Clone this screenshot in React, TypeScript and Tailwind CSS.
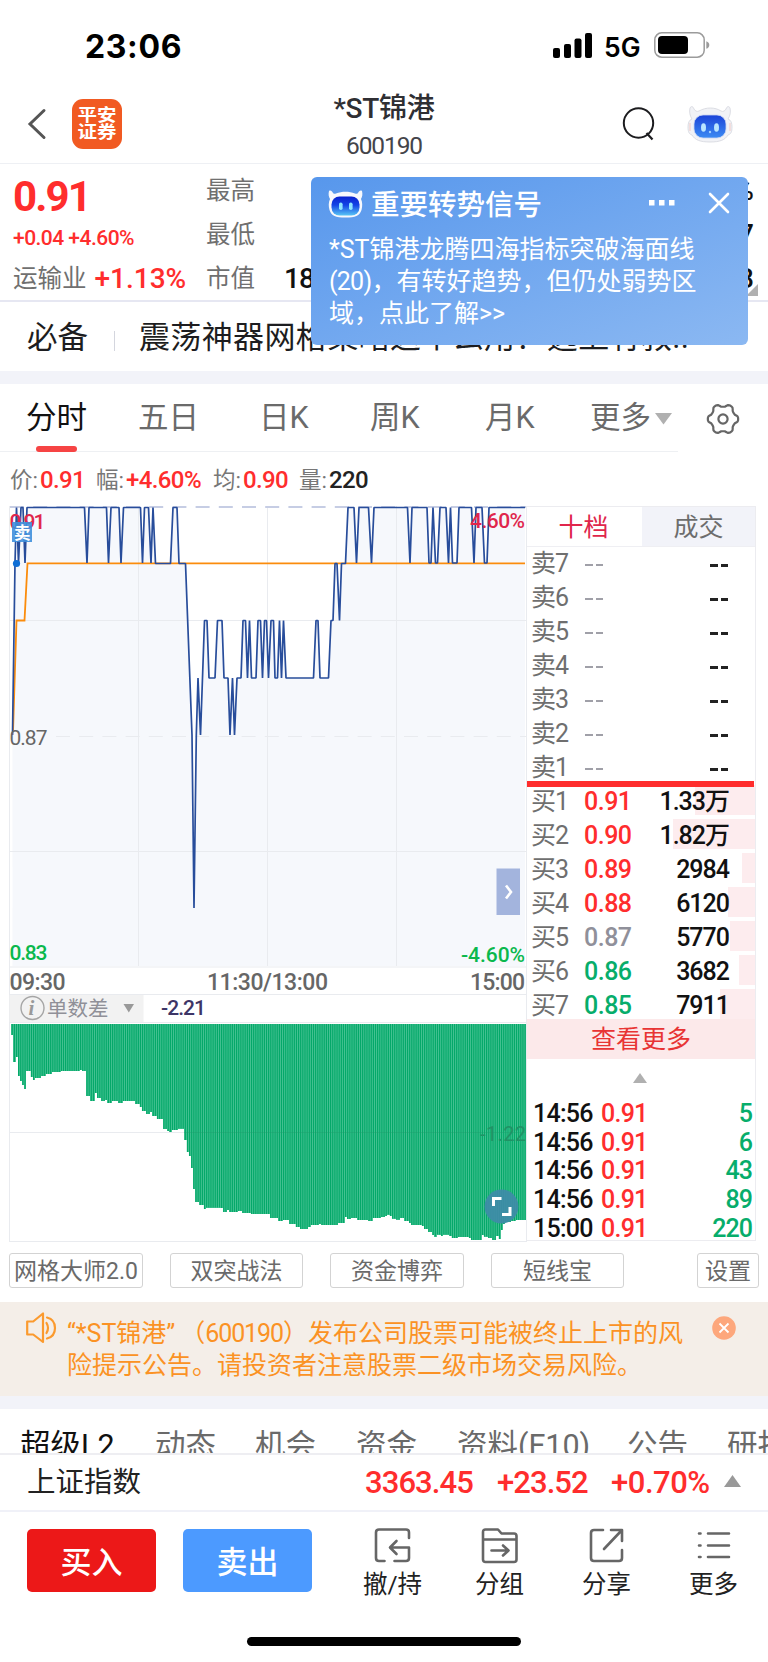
import type { ReactNode } from 'react'

const PRICE_POINTS =
  '12.5,735 15,563 16.5,507.5 18.5,563 21,507.5 23,507.5 25,563 27,507.5 84.5,507.5 87,563 89,507.5 106.5,507.5 108.5,563 111,507.5 119,507.5 121,563 123.5,507.5 140.5,507.5 142.5,563 144.5,507.5 148.5,507.5 151,563 153,507.5 155.5,563.5 170.5,563.5 173,507.5 177,507.5 179,563.5 185.5,563.5 192,735 194,908 196.3,735 198,678 200.5,735 204.5,620.5 207,620.5 209,678 215,678 217.5,620.5 222,620.5 224,678 228,678 230,735 232.5,678 234.5,735 237,678 241,678 243,620.5 245.5,620.5 247.5,678 249.5,620.5 251.5,678 256,678 258,620.5 260.5,620.5 262.5,678 264.5,620.5 266.5,620.5 268.5,678 271,620.5 273.5,620.5 275,678 277.5,678 279.5,620.5 281.5,678 283.5,620.5 286,678 313.5,678 316,620.5 318,620.5 320,678 328.5,678 331,620.5 333,620.5 335,563.5 337,563.5 339.5,620.5 341.5,563.5 345.5,563.5 348,507.5 354,507.5 356.5,563 359,507.5 368.5,507.5 371.5,563 374,507.5 407.5,507.5 410,563 412,507.5 427,507.5 429,563 431,563 433,507.5 435.5,563 437.5,563 440,507.5 446,507.5 448.5,563 450.5,507.5 452.5,563 457,563 459,507.5 471.5,507.5 474,563 476,507.5 482,507.5 484.5,563 487,563 489,507.5 525,507.5'

// [x, bottom] pairs: every bar from x onwards hangs down to this level
const BAR_STEPS: [number, number][] = [
  [11, 1035], [13, 1062], [15, 1057], [17.5, 1076], [19.5, 1081], [21.5, 1085], [23.5, 1089], [26, 1071],
  [30, 1077], [32.5, 1080], [34.5, 1078], [41, 1076], [45, 1074], [52, 1072], [60, 1071], [79, 1070],
  [82, 1071], [86, 1096], [90, 1101], [94.5, 1093], [97, 1098], [101, 1101], [104, 1100], [107, 1103],
  [111, 1101], [118, 1103], [122, 1101], [134, 1104], [139, 1107], [142, 1111], [146, 1114], [150, 1112],
  [152, 1116], [157, 1119], [162, 1129], [166, 1131], [169, 1132], [172, 1130], [178, 1128.5], [184, 1140],
  [186.5, 1152], [189, 1156], [191, 1168], [193, 1189], [195, 1202], [199, 1205], [203, 1209], [206, 1207.5],
  [221, 1208], [223, 1212], [226, 1210], [228, 1212], [237, 1211], [242, 1213], [250, 1214], [269, 1218],
  [278, 1221], [283, 1220], [289, 1224], [294, 1227], [300, 1229], [308, 1227], [311, 1225], [318, 1224],
  [320, 1225], [338, 1223], [344, 1217], [347, 1219], [351, 1218], [357, 1220], [368, 1221], [371, 1218],
  [380, 1217], [384, 1216], [386, 1214.5], [388, 1216], [392, 1218.5], [396, 1219.5], [399, 1218], [403, 1221],
  [408, 1223], [411, 1225], [421, 1226], [424, 1229], [427, 1232], [431, 1235], [434, 1236.5], [436, 1234.5],
  [440, 1236], [443, 1234.5], [448, 1236], [452, 1238], [458, 1237], [468, 1238], [471, 1240], [480, 1235],
  [484, 1236.5], [488, 1238], [492, 1240], [496, 1236], [498, 1239], [500, 1230], [502, 1224], [505, 1222],
  [511, 1221], [516, 1220],
]

const BAR_COUNT = 241
const BAR_PITCH = 515 / BAR_COUNT

const bars = Array.from({ length: BAR_COUNT }, (_, i) => {
  const x = 11.3 + i * BAR_PITCH
  let bottom = BAR_STEPS[0][1]
  for (const [from, level] of BAR_STEPS) {
    if (from <= x + 0.6) bottom = level
  }
  return { x, bottom }
})

// six-lobed cog outline
const COG_POINTS = Array.from({ length: 72 }, (_, i) => {
  const angle = (i * 5 * Math.PI) / 180
  const radius = 13.7 + 1.6 * Math.tanh(1.6 * Math.cos(6 * angle))
  return `${(radius * Math.cos(angle)).toFixed(2)},${(radius * Math.sin(angle)).toFixed(2)}`
}).join(' ')

const asks = ['卖7', '卖6', '卖5', '卖4', '卖3', '卖2', '卖1']

const bids = [
  { label: '买1', price: '0.91', volume: '1.33万', tone: 'text-[#ff2d2d]', depth: 60 },
  { label: '买2', price: '0.90', volume: '1.82万', tone: 'text-[#ff2d2d]', depth: 82 },
  { label: '买3', price: '0.89', volume: '2984', tone: 'text-[#ff2d2d]', depth: 13 },
  { label: '买4', price: '0.88', volume: '6120', tone: 'text-[#ff2d2d]', depth: 27 },
  { label: '买5', price: '0.87', volume: '5770', tone: 'text-[#90909a]', depth: 25 },
  { label: '买6', price: '0.86', volume: '3682', tone: 'text-[#07ad6b]', depth: 16 },
  { label: '买7', price: '0.85', volume: '7911', tone: 'text-[#07ad6b]', depth: 35 },
]

const trades = [
  ['14:56', '5'],
  ['14:56', '6'],
  ['14:56', '43'],
  ['14:56', '89'],
  ['15:00', '220'],
]

function StatusBar() {
  return (
    <div className="flex h-[82px] items-center pt-[12px] font-['Inter','Liberation_Sans',sans-serif] font-bold text-black">
      <div className="ml-[85px] w-[468px] text-[32px] leading-none tracking-[0.02em]">23:06</div>
      <svg width="39" height="25" viewBox="0 0 39 25" className="-mt-1">
        <rect x="0" y="15" width="7" height="10" rx="2" />
        <rect x="11" y="11" width="7" height="14" rx="2" />
        <rect x="21.5" y="5.5" width="7" height="19.5" rx="2" />
        <rect x="32" y="0" width="7" height="25" rx="2" />
      </svg>
      <div className="ml-3 w-[50px] text-[26.5px] leading-none font-semibold">5G</div>
      <svg width="56" height="26" viewBox="0 0 56 26" className="-mt-1">
        <rect x="0.8" y="0.8" width="49.4" height="24.4" rx="7" fill="none" stroke="#9b9b9b" strokeWidth="1.5" />
        <rect x="4" y="4" width="30" height="18" rx="4" />
        <path d="M52.3 9.2c2 .7 3 2.100 3 3.800s-1 3.100-3 3.800z" fill="#9b9b9b" />
      </svg>
    </div>
  )
}

function Robot({ width, height }: { width: number; height: number }) {
  return (
    <svg width={width} height={height} viewBox="0 0 46 38">
      <defs>
        <linearGradient id="visor" x1="0" y1="0" x2="0" y2="1">
          <stop offset="0" stopColor="#1b43d8" />
          <stop offset="1" stopColor="#3c8bf3" />
        </linearGradient>
      </defs>
      <path
        d="M3 3c1-2 3-2 4 1 1 2 3 3 5 2 7-4 16-4 22 0 2 1 4 0 5-2 1-3 3-3 4-1 1 4 0 8-2 11 3 1 4 4 4 8 0 5-1 7-4 8-3 5-8 7-18 7S8 35 5 30c-3-1-4-3-4-8 0-4 1-7 4-8C3 11 2 7 3 3z"
        fill="#f1f2f6"
        stroke="#d4d5dd"
        strokeWidth="0.8"
      />
      <path d="M3 18v8M43 18v8" stroke="#f3c9c5" strokeWidth="1" />
      <rect x="7" y="10" width="32" height="23" rx="9" fill="url(#visor)" stroke="#c9d4f2" strokeWidth="0.8" />
      <ellipse cx="16.500" cy="22.500" rx="2.500" ry="4.300" fill="#b9e5ff" />
      <ellipse cx="29.500" cy="22.500" rx="2.500" ry="4.300" fill="#b9e5ff" />
      <circle cx="23" cy="27" r="1.200" fill="#9fd0ff" />
    </svg>
  )
}

function PopupRobot() {
  return (
    <svg width="35" height="28" viewBox="0 0 35 28">
      <defs>
        <linearGradient id="popupVisor" x1="0" y1="0" x2="0" y2="1">
          <stop offset="0" stopColor="#0a22cf" />
          <stop offset="0.45" stopColor="#1344e6" />
          <stop offset="1" stopColor="#58c5f5" />
        </linearGradient>
      </defs>
      <path
        d="M1 1c1.500-1 3 0 4 2 1 1 2 1 3 .5 6-2.500 13-2.500 19 0 1 .5 2 .5 3-.5 1-2 2.500-3 4-2 .8 3 .3 6-1 8 1.500 3 1.600 7 .5 11-2 6-6 7.500-16 7.500S3.500 26 1.500 20C.4 16 .5 12 2 9 .7 7 .2 4 1 1z"
        fill="#f7f8fc"
      />
      <rect x="3.500" y="6.500" width="28" height="19" rx="8" fill="url(#popupVisor)" />
      <rect x="11" y="12.500" width="3.600" height="7.500" rx="1.800" fill="#8fe6ff" />
      <rect x="21" y="12.500" width="3.600" height="7.500" rx="1.800" fill="#8fe6ff" />
    </svg>
  )
}

function Header() {
  return (
    <header className="flex h-[82px] items-center border-b border-[#eef0f4] pt-[3px]">
      <svg width="20" height="32" viewBox="0 0 20 32" className="ml-[27px]">
        <path d="M17 2.500 3 16l14 13.500" fill="none" stroke="#555" strokeWidth="3" strokeLinecap="round" />
      </svg>
      <div className="ml-[25px] flex h-[50px] w-[50px] flex-col items-center justify-center rounded-[11px] bg-[#f15a22] text-[19.5px] leading-[19px] font-bold text-white">
        <div className="flex scale-y-90 flex-col">
          <span>平安</span>
          <span>证券</span>
        </div>
      </div>
      <div className="ml-[112px] flex w-[300px] flex-col items-center">
        <h1 className="mt-1 text-[28px] leading-[34px] font-medium tracking-[-0.01em] text-[#2f2f33]">*ST锦港</h1>
        <div className="mt-[5px] text-[24.5px] leading-[30px] tracking-[-0.045em] text-[#44444a]">600190</div>
      </div>
      <svg width="34" height="36" viewBox="0 0 34 36" className="ml-[88px]">
        <circle cx="16.500" cy="17" r="14.700" fill="none" stroke="#1c1c1f" strokeWidth="2" />
        <path d="m24.500 27 6 6.500" stroke="#1c1c1f" strokeWidth="2.200" />
      </svg>
      <div className="ml-[31px]">
        <Robot width={46} height={38} />
      </div>
    </header>
  )
}

function Quote() {
  return (
    <section className="relative flex h-[138px] border-b-2 border-[#e6e7f2]">
      <div className="ml-[13px] w-[193px] whitespace-nowrap text-[#ff2d2d]">
        <div className="mt-3 text-[42px] leading-[42px] font-bold tracking-[-0.045em]">0.91</div>
        <div className="mt-[8px] text-[21px] leading-[24px] font-medium tracking-[-0.025em]">+0.04 +4.60%</div>
        <div className="mt-[12px] flex items-center gap-[8px] leading-[34px]">
          <span className="text-[24.500px] text-[#707070]">运输业</span>
          <span className="text-[28px] font-medium">+1.13%</span>
        </div>
      </div>
      <div className="w-[78px] text-[24.5px] leading-[44px] text-[#707070]">
        <div className="mt-[5px]">最高</div>
        <div>最低</div>
        <div>市值</div>
      </div>
      <div className="w-[469px] text-[28px] leading-[44px] font-medium tracking-[-0.03em] text-[#111]">
        <div className="mt-[5px] flex justify-between pl-[60px]">
          <span>0.91</span>
          <span>4.60%</span>
        </div>
        <div className="flex justify-between pl-[60px]">
          <span>0.84</span>
          <span>0.87</span>
        </div>
        <div className="flex justify-between">
          <span>18.22亿</span>
          <span>0.38</span>
        </div>
      </div>
      <svg width="12" height="12" className="absolute right-[10px] bottom-[4px]">
        <path d="M12 0v12H0z" fill="#b0b0b0" />
      </svg>
    </section>
  )
}

function SignalPopup() {
  return (
    <aside className="absolute top-[177px] left-[311px] h-[168px] w-[437px] rounded-[6px] bg-linear-to-br from-[#5797ec] to-[#8bb8f2] pl-[17px] text-white">
      <div className="flex h-[54px] items-center">
        <PopupRobot />
        <h2 className="mt-[5px] ml-[8px] w-[278px] text-[28.5px] leading-none font-medium">重要转势信号</h2>
        <svg width="26" height="6" className="mb-[2px]">
          <rect x="0" width="5.500" height="5.500" fill="#fff" />
          <rect x="10" width="5.500" height="5.500" fill="#fff" />
          <rect x="20" width="5.500" height="5.500" fill="#fff" />
        </svg>
        <svg width="22" height="22" viewBox="0 0 22 22" className="mb-[2px] ml-[33px]">
          <path d="m2 2 18 18M20 2 2 20" stroke="#fff" strokeWidth="2.600" strokeLinecap="round" />
        </svg>
      </div>
      <p className="mt-[3px] ml-[1px] text-[25px] leading-[32px] whitespace-nowrap">
        *ST锦港龙腾四海指标突破海面线
        <br />
        <span className="tracking-[-0.03em]">(20)</span>，有转好趋势，但仍处弱势区
        <br />
        域，点此了解&gt;&gt;
      </p>
    </aside>
  )
}

function NewsRow() {
  return (
    <div className="flex h-[69px] items-center overflow-hidden pt-[3px] text-[31px] leading-[40px] whitespace-nowrap text-[#1d1d20]">
      <span className="ml-[27px] w-[87px] text-[30.5px]">必备</span>
      <span className="mt-[5px] h-5 w-px bg-[#d4d6de]" />
      <span className="ml-6 tracking-[0.012em]">震荡神器网格策略这个么用？选上有救..</span>
    </div>
  )
}

function PeriodTabs() {
  return (
    <nav className="relative flex h-[68px] items-center text-[30.5px] leading-[40px] whitespace-nowrap text-[#6a6a6a]">
      <span className="ml-[26px] w-[112px] text-[#111]">分时</span>
      <span className="w-[121px]">五日</span>
      <span className="w-[111px]">日K</span>
      <span className="w-[115px]">周K</span>
      <span className="w-[105px]">月K</span>
      <span className="w-[65px]">更多</span>
      <svg width="18" height="12" className="mt-[1px]">
        <path d="M0 0h17L8.500 11.500z" fill="#b0b0b0" />
      </svg>
      <svg width="34" height="34" viewBox="-17 -17 34 34" className="mt-[1px] ml-[33px]" fill="none" stroke="#666" strokeWidth="2.200">
        <polygon points={COG_POINTS} strokeLinejoin="round" />
        <circle r="4.600" />
      </svg>
      <span className="absolute bottom-0 left-0 h-px w-[678px] bg-[#eef0f3]" />
      <span className="absolute bottom-0 left-9 h-[6px] w-[41px] rounded-[3px] bg-[#f64444]" />
    </nav>
  )
}

function Metric({ label, value, className }: { label: string; value: string; className: string }) {
  return (
    <div className={className}>
      <span className="mr-[2px] text-[22.5px] text-[#777]">{label}:</span>
      <span className="font-medium tracking-[-0.025em]">{value}</span>
    </div>
  )
}

function ChartText({
  x,
  y,
  length,
  fill,
  size = 21,
  weight = 500,
  anchor = 'start',
  children,
}: {
  x: number
  y: number
  length: number
  fill: string
  size?: number
  weight?: number
  anchor?: 'start' | 'end'
  children: ReactNode
}) {
  return (
    <text x={x} y={y} fontSize={size} fontWeight={weight} fill={fill} textLength={length} textAnchor={anchor}>
      {children}
    </text>
  )
}

function Charts() {
  return (
    <svg width="527" height="737" viewBox="0 506 527 737" className="shrink-0">
      {/* price chart */}
      <polygon points={`12.5,966 ${PRICE_POINTS} 525,966`} fill="#f6f8fc" />
      <g stroke="#e9ebef" strokeWidth="1">
        <path d="M9.500 506v736M526.500 506v736M138.500 506v460M267.500 506v460M396.500 506v460M9.500 620.500h517M9.500 851.500h517" />
        <path d="M56 736.500h471" strokeDasharray="14 9.200" />
        <path d="M9.500 967h517M9.500 994.500h517M9.500 1022.500h517M9.500 1132.500h517M9.500 1241.500h517" />
      </g>
      <path d="M10 507h516" stroke="#c6cde4" strokeWidth="1.800" strokeDasharray="14 9.200" />
      <polyline points="13,732 16.500,620.500 24.500,620.500 27.500,563.300 525,563.300" fill="none" stroke="#fb8c0c" strokeWidth="1.800" />
      <polyline points={PRICE_POINTS} fill="none" stroke="#284d9b" strokeWidth="1.700" strokeLinejoin="bevel" />
      <ChartText x={9.5} y={529} length={36} fill="#e0264c">0.91</ChartText>
      <ChartText x={525} y={527.5} length={55} fill="#e0264c" anchor="end">4.60%</ChartText>
      <rect x="12" y="522" width="20" height="20" fill="#3f8fdc" fillOpacity="0.9" />
      <text x="14" y="538.500" fontSize="16.500" fontWeight="700" fill="#fff">卖</text>
      <circle cx="16.500" cy="563.500" r="3.600" fill="#0f6fd6" />
      <ChartText x={9.5} y={745} length={38} fill="#666" weight={400}>0.87</ChartText>
      <ChartText x={9.5} y={960} length={38} fill="#0ab84d">0.83</ChartText>
      <ChartText x={525} y={962} length={64} fill="#0ab84d" anchor="end">-4.60%</ChartText>
      <rect x="496.500" y="868.500" width="23.500" height="46.500" fill="#a3b4dd" />
      <path d="m506 885.500 5 6.500-5 6.500" fill="none" stroke="#fff" strokeWidth="2.600" />
      <ChartText x={9.5} y={990} length={56} fill="#666" size={23}>09:30</ChartText>
      <ChartText x={207} y={990} length={121} fill="#666" size={23}>11:30/13:00</ChartText>
      <ChartText x={525} y={990} length={55} fill="#666" size={23} anchor="end">15:00</ChartText>

      {/* indicator selector */}
      <rect x="9.500" y="995" width="134" height="27" fill="#f2f2f2" />
      <circle cx="32.500" cy="1008" r="11.500" fill="none" stroke="#a5a5a5" strokeWidth="1.400" />
      <text x="28.500" y="1015" fontSize="21" fontStyle="italic" fontWeight="700" fill="#999" className="font-['Liberation_Serif',serif]">i</text>
      <text x="47" y="1015.500" fontSize="20.500" fill="#909098">单数差</text>
      <path d="M123.500 1004h10.500l-5.200 8.500z" fill="#999" />
      <ChartText x={161} y={1015} length={45} fill="#3d3566">-2.21</ChartText>

      {/* order difference histogram */}
      {bars.map((bar) => (
        <g key={bar.x}>
          <rect x={bar.x} y="1024" width={BAR_PITCH + 0.1} height={bar.bottom - 1024} fill="#4cc597" shapeRendering="crispEdges" />
          <rect x={bar.x + 0.3} y="1024" width="1.250" height={bar.bottom - 1024} fill="#04a869" />
        </g>
      ))}
      <path d="M184 1132.500h342" stroke="#1c9c6b" strokeOpacity="0.35" />
      <ChartText x={526} y={1141} length={46} fill="#209265" size={20} weight={400} anchor="end">-1.22</ChartText>
      <circle cx="501.500" cy="1206.500" r="17" fill="#3f8ba8" fillOpacity="0.92" />
      <path d="M493.500 1206v-7.500h8M510 1207v7.500h-8" fill="none" stroke="#fff" strokeWidth="3" />
    </svg>
  )
}

function OrderBook() {
  return (
    <div className="flex h-[735px] w-[229px] flex-col border border-l-0 border-[#ececf0] text-[25px] tracking-[-0.04em]">
      <div className="flex h-[40px] border-b border-[#efeff3] text-[25px] leading-[42px] tracking-normal">
        <div className="w-[115px] pr-[2px] text-center text-[#e0264c]">十档</div>
        <div className="flex-1 bg-[#f2f3f9] text-center text-[#6d6d6d]">成交</div>
      </div>
      <div className="leading-[34px]">
        {asks.map((label) => (
          <div key={label} className="flex h-[34px] pl-[4px]">
            <span className="w-[54px] text-[#6f6f6f]">{label}</span>
            <span className="flex flex-1 items-center gap-[3px] pt-[2px]">
              <i className="h-[2.5px] w-[7.500px] bg-[#a0a0a8]" />
              <i className="h-[2.5px] w-[7.500px] bg-[#a0a0a8]" />
            </span>
            <span className="flex items-center gap-[3px] pt-[2px] pr-[27px]">
              <i className="h-[3px] w-[7.500px] bg-[#222]" />
              <i className="h-[3px] w-[7.500px] bg-[#222]" />
            </span>
          </div>
        ))}
      </div>
      <div className="z-10 -mt-1 mr-[1px] h-[6px] shrink-0 bg-[#ff2d2d]" />
      <div className="-mt-[2px] leading-[34px]">
        {bids.map((bid) => (
          <div key={bid.label} className="relative flex h-[34px] pl-[4px]">
            <div className="absolute top-0 right-0 h-[30px] bg-[#fdecee]" style={{ width: bid.depth }} />
            <span className="relative w-[53px] text-[#6f6f6f]">{bid.label}</span>
            <span className={`relative font-medium tracking-[-0.02em] ${bid.tone}`}>{bid.price}</span>
            <span className="relative flex-1 pr-[26px] text-right font-medium text-[#111]">{bid.volume}</span>
          </div>
        ))}
      </div>
      <div className="-mt-1 h-[40px] shrink-0 bg-[#fce9ea] text-center text-[25px] leading-[42px] tracking-normal text-[#e83434]">查看更多</div>
      <svg width="14" height="10" className="mt-[14px] ml-[106px] shrink-0">
        <path d="M7 0l7 10H0z" fill="#b0b0b0" />
      </svg>
      <div className="mt-[17px] leading-[28.7px] font-medium">
        {trades.map(([time, volume], i) => (
          <div key={i} className="flex h-[28.7px] pr-[3px] pl-[6px]">
            <span className="w-[68px] tracking-[-0.03em] text-[#111]">{time}</span>
            <span className="tracking-[-0.03em] text-[#ff2d2d]">0.91</span>
            <span className="flex-1 text-right text-[#07ad6b]">{volume}</span>
          </div>
        ))}
      </div>
    </div>
  )
}

function ToolButton({ label, className }: { label: string; className: string }) {
  return (
    <button className={`h-[35px] rounded-[3px] border border-[#d3d3d3] text-[23px] leading-[35px] whitespace-nowrap text-[#6a6a6a] ${className}`}>
      {label}
    </button>
  )
}

function Notice() {
  return (
    <section className="flex h-[94px] bg-[#f4eee8] text-[#fb9224]">
      <svg width="32" height="34" viewBox="0 0 32 34" className="mt-[9px] ml-[26px]" fill="none" stroke="#fb9a2e" strokeWidth="2.200" strokeLinejoin="round">
        <path d="M1.200 10.500h6L17 2.500v28.500l-9.800-7.500h-6z" />
        <path d="M20.500 12q3 5 0 10M21 6.500q8 2 8 10.500t-8 10.500" strokeLinecap="round" />
      </svg>
      <p className="mt-[16px] ml-[9px] w-[641px] text-[25px] leading-[32px] whitespace-nowrap [text-spacing-trim:space-all]">
        “*ST锦港”<span className="ml-[5px]">（</span>
        <span className="tracking-[-0.045em]">600190</span>）发布公司股票可能被终止上市的风
        <br />
        险提示公告。请投资者注意股票二级市场交易风险。
      </p>
      <svg width="24" height="24" viewBox="0 0 24 24" className="mt-[14px] ml-[4px]">
        <circle cx="12" cy="12" r="11.800" fill="#fda77c" />
        <path d="m7.500 7.500 9 9M16.500 7.500l-9 9" stroke="#fff" strokeWidth="1.800" />
      </svg>
    </section>
  )
}

function SectionTabs() {
  return (
    <nav className="flex h-[44px] overflow-hidden pt-[17px] text-[30.5px] leading-[40px] whitespace-nowrap text-[#6a6a6a]">
      <span className="ml-[20px] w-[135px] shrink-0 text-[#111]">超级L2</span>
      <span className="w-[100px] shrink-0">动态</span>
      <span className="w-[101px] shrink-0">机会</span>
      <span className="w-[101px] shrink-0">资金</span>
      <span className="w-[170px] shrink-0">资料(F10)</span>
      <span className="w-[100px] shrink-0">公告</span>
      <span className="shrink-0">研报</span>
    </nav>
  )
}

function Action({ label, children }: { label: string; children: ReactNode }) {
  return (
    <div className="-mt-px flex w-[107px] flex-col items-center text-[24.5px] leading-[30px] text-[#222]">
      <svg width="40" height="38" viewBox="0 0 40 38" fill="none" stroke="#666" strokeWidth="2.600" strokeLinecap="round" strokeLinejoin="round">
        {children}
      </svg>
      <span className="mt-[4px]">{label}</span>
    </div>
  )
}

function BottomBar() {
  return (
    <footer className="flex h-[127px] border-t-2 border-[#f0f1f8] pt-[17px]">
      <button className="ml-[27px] h-[63px] w-[129px] rounded-[5px] bg-[#ec1818] text-[31px] leading-[67px] font-medium text-white">买入</button>
      <button className="mr-[27px] ml-[27px] h-[63px] w-[129px] rounded-[5px] bg-[#4c9aff] text-[31px] leading-[67px] font-medium text-white">卖出</button>
      <Action label="撤/持">
        <path d="M36 10V4.500Q36 1.500 33 1.500H6Q3 1.500 3 4.500V30Q3 33 6 33H11.500M21.500 33H33Q36 33 36 30V19.500H18M23.500 13l-6.500 6.500 6.500 6.500" />
      </Action>
      <Action label="分组">
        <path d="M3 4Q3 1.500 5.500 1.500H18L21.500 5.500H34Q36.500 5.500 36.500 8V31.500Q36.500 34 34 34H5.500Q3 34 3 31.500zM3 11.500h33.500M11.500 22.500H28M23 17.500l5.500 5-5.500 5" />
      </Action>
      <Action label="分享">
        <path d="M16 2H7Q4 2 4 5V30Q4 33 7 33H32Q35 33 35 30V22M24 2h11v11M34.500 2.500 17 21" />
      </Action>
      <Action label="更多">
        <path d="M5 5.500h1.500M14 5.500h21M5 17.500h1.500M14 17.500h21M5 29h1.500M14 29h21" />
      </Action>
    </footer>
  )
}

export default function App() {
  return (
    <div className="relative h-[1662px] w-[768px] overflow-hidden bg-white font-['Roboto','Noto_Sans_CJK_SC',sans-serif]">
      <StatusBar />
      <Header />
      <Quote />
      <NewsRow />
      <div className="h-[13px] bg-[#f2f3f9]" />
      <PeriodTabs />
      <div className="flex h-[53px] items-center pt-[3px] pl-[10px] text-[24px] leading-[30px] whitespace-nowrap text-[#ff2d2d]">
        <Metric label="价" value="0.91" className="w-[86px]" />
        <Metric label="幅" value="+4.60%" className="w-[117px]" />
        <Metric label="均" value="0.90" className="w-[86px]" />
        <Metric label="量" value="220" className="text-[#222]" />
      </div>
      <div className="flex h-[738px] pt-px">
        <Charts />
        <OrderBook />
      </div>
      <div className="flex h-[59px] pt-[10px] pl-[9px]">
        <ToolButton label="网格大师2.0" className="w-[134px]" />
        <ToolButton label="双突战法" className="ml-[27px] w-[133px]" />
        <ToolButton label="资金博弈" className="ml-[27px] w-[134px]" />
        <ToolButton label="短线宝" className="ml-[27px] w-[133px]" />
        <ToolButton label="设置" className="ml-[73px] w-[62px]" />
      </div>
      <Notice />
      <div className="h-[13px] bg-[#f2f3f9]" />
      <SectionTabs />
      <div className="flex h-[57px] items-center border-t-2 border-[#eeeef2] whitespace-nowrap">
        <span className="ml-[27px] w-[338px] text-[28.5px] leading-[40px] text-[#222]">上证指数</span>
        <div className="flex w-[359px] text-[31px] leading-[40px] font-medium tracking-[-0.03em] text-[#ff2d2d]">
          <span className="w-[132px]">3363.45</span>
          <span className="w-[114px]">+23.52</span>
          <span className="tracking-[-0.015em]">+0.70%</span>
        </div>
        <svg width="17" height="12" className="mb-1">
          <path d="M8.500 0 17 12H0z" fill="#999" />
        </svg>
      </div>
      <BottomBar />
      <div className="mx-auto h-[9px] w-[274px] rounded-full bg-black" />
      <SignalPopup />
    </div>
  )
}
